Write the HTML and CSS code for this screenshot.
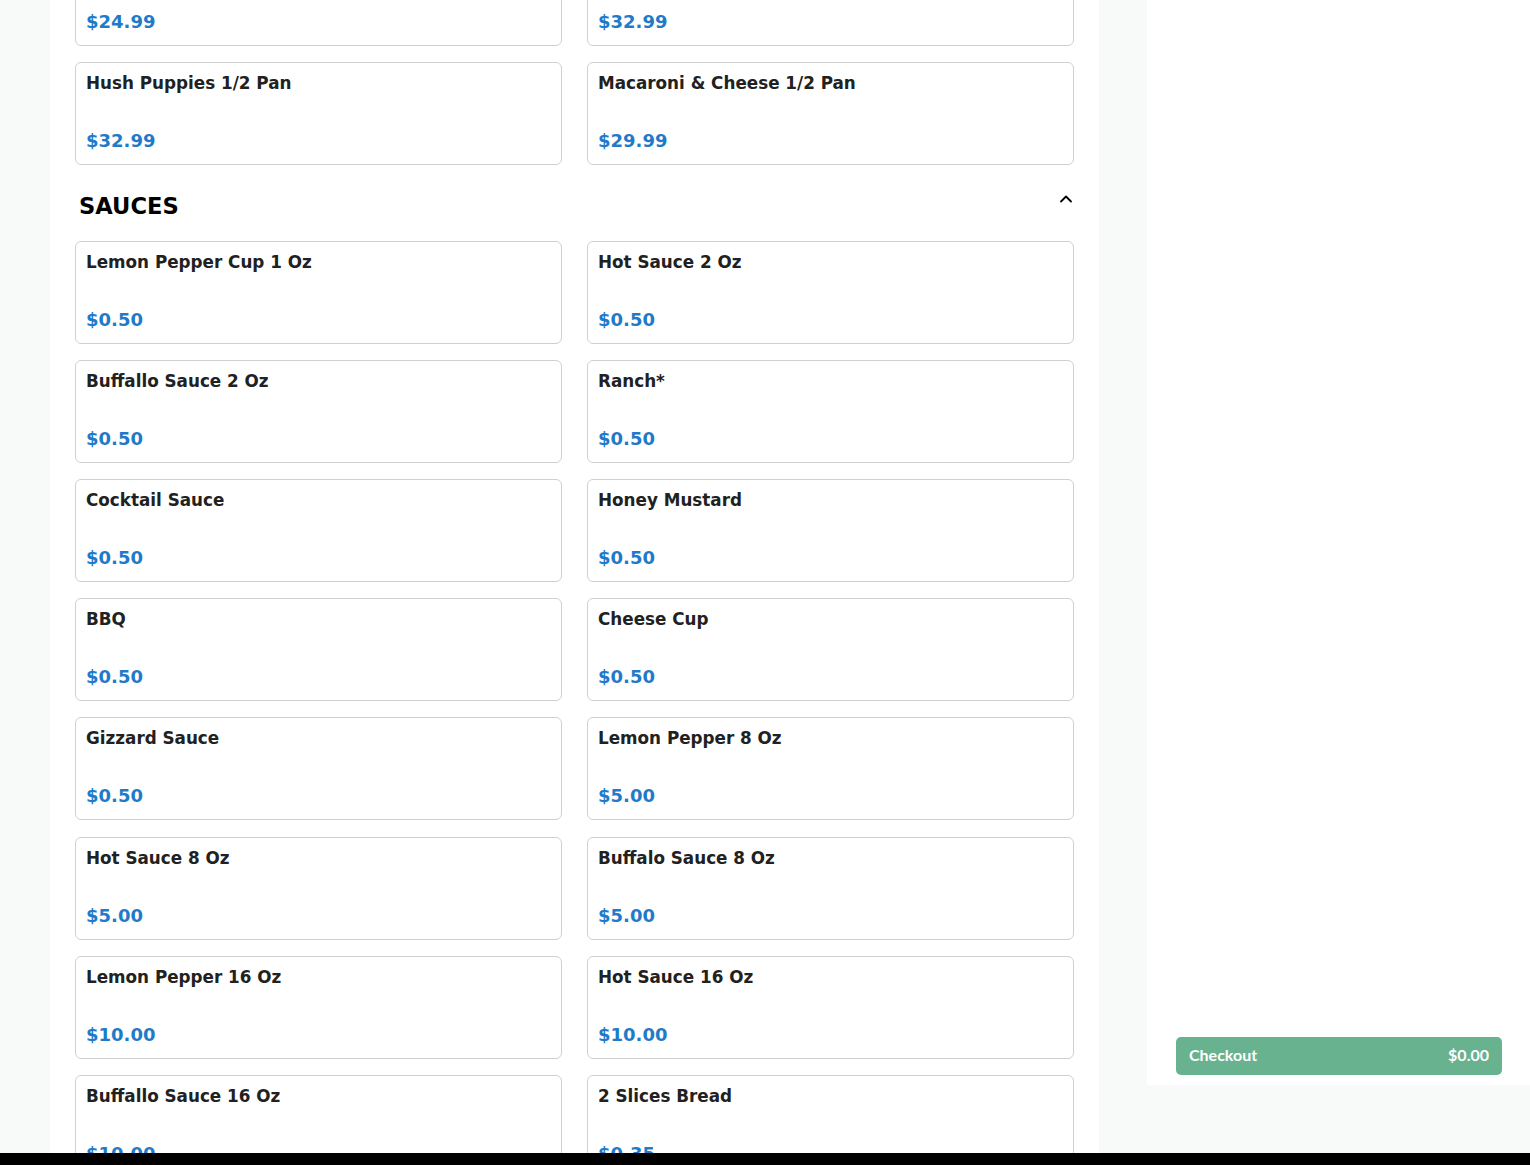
FILE: index.html
```html
<!DOCTYPE html>
<html lang="en">
<head>
    <meta charset="UTF-8">
    <meta name="viewport" content="width=device-width, initial-scale=1.0">
    <title>Menu</title>
    <link rel="stylesheet" href="styles.css">
</head>
<body>
    <div class="page">
        <main class="menu">
            <section class="category first">
                <div class="items">
                    <div class="item">
                        <div class="item-name">Collard Greens 1/2 Pan</div>
                        <div class="item-price">$24.99</div>
                    </div>
                    <div class="item">
                        <div class="item-name">Fries 1/2 Pan</div>
                        <div class="item-price">$32.99</div>
                    </div>
                    <div class="item">
                        <div class="item-name">Hush Puppies 1/2 Pan</div>
                        <div class="item-price">$32.99</div>
                    </div>
                    <div class="item">
                        <div class="item-name">Macaroni &amp; Cheese 1/2 Pan</div>
                        <div class="item-price">$29.99</div>
                    </div>
                </div>
            </section>

            <section class="category">
                <div class="category-header">
                    <h2>SAUCES</h2>
                    <svg class="chevron" width="14" height="14" viewBox="0 0 14 14">
                        <path d="M2 9.5 L7 4.5 L12 9.5" fill="none" stroke="#000" stroke-width="1.8" stroke-linecap="round" stroke-linejoin="round"/>
                    </svg>
                </div>
                <div class="items">
                    <div class="item">
                        <div class="item-name">Lemon Pepper Cup 1 Oz</div>
                        <div class="item-price">$0.50</div>
                    </div>
                    <div class="item">
                        <div class="item-name">Hot Sauce 2 Oz</div>
                        <div class="item-price">$0.50</div>
                    </div>
                    <div class="item">
                        <div class="item-name">Buffallo Sauce 2 Oz</div>
                        <div class="item-price">$0.50</div>
                    </div>
                    <div class="item">
                        <div class="item-name">Ranch*</div>
                        <div class="item-price">$0.50</div>
                    </div>
                    <div class="item">
                        <div class="item-name">Cocktail Sauce</div>
                        <div class="item-price">$0.50</div>
                    </div>
                    <div class="item">
                        <div class="item-name">Honey Mustard</div>
                        <div class="item-price">$0.50</div>
                    </div>
                    <div class="item">
                        <div class="item-name">BBQ</div>
                        <div class="item-price">$0.50</div>
                    </div>
                    <div class="item">
                        <div class="item-name">Cheese Cup</div>
                        <div class="item-price">$0.50</div>
                    </div>
                    <div class="item">
                        <div class="item-name">Gizzard Sauce</div>
                        <div class="item-price">$0.50</div>
                    </div>
                    <div class="item">
                        <div class="item-name">Lemon Pepper 8 Oz</div>
                        <div class="item-price">$5.00</div>
                    </div>
                    <div class="item">
                        <div class="item-name">Hot Sauce 8 Oz</div>
                        <div class="item-price">$5.00</div>
                    </div>
                    <div class="item">
                        <div class="item-name">Buffalo Sauce 8 Oz</div>
                        <div class="item-price">$5.00</div>
                    </div>
                    <div class="item">
                        <div class="item-name">Lemon Pepper 16 Oz</div>
                        <div class="item-price">$10.00</div>
                    </div>
                    <div class="item">
                        <div class="item-name">Hot Sauce 16 Oz</div>
                        <div class="item-price">$10.00</div>
                    </div>
                    <div class="item">
                        <div class="item-name">Buffallo Sauce 16 Oz</div>
                        <div class="item-price">$10.00</div>
                    </div>
                    <div class="item">
                        <div class="item-name">2 Slices Bread</div>
                        <div class="item-price">$0.35</div>
                    </div>
                </div>
            </section>
        </main>

        <aside class="cart">
            <a href="#" class="checkout-btn">
                <span>Checkout</span>
                <span>$0.00</span>
            </a>
        </aside>
    </div>
    <div class="bottom-bar"></div>
</body>
</html>
```

FILE: styles.css
```css
html, body {
    margin: 0;
    padding: 0;
    height: 100%;
    overflow: hidden;
}
body {
    font-family: 'DejaVu Sans', Verdana, sans-serif;
    background-color: #f8f9f9;
    color: #212121;
}
.page {
    display: flex;
    align-items: flex-start;
    padding-left: 50px;
    height: 100%;
}
.menu {
    width: 1049px;
    flex-shrink: 0;
    background: #fff;
    padding: 0 25px 0 25px;
    box-sizing: border-box;
    min-height: 100%;
}
.category.first {
    margin-top: -57px;
}
.category-header {
    display: flex;
    justify-content: space-between;
    align-items: flex-start;
    padding: 25px 1px 0 4px;
    margin-bottom: 19px;
}
.category-header h2 {
    margin: 0;
    font-size: 22.6px;
    line-height: 32px;
    font-weight: bold;
    color: #000;
}
.chevron {
    margin-top: 2px;
}
.items {
    display: grid;
    grid-template-columns: 1fr 1fr;
    column-gap: 25px;
    row-gap: 16.1px;
}
.item {
    height: 103px;
    box-sizing: border-box;
    border: 1px solid #d0d0d0;
    border-radius: 6px;
    padding: 10px 10px 12px;
    display: flex;
    flex-direction: column;
    justify-content: space-between;
    background: #fff;
}
.item-name {
    font-size: 16.8px;
    font-weight: bold;
    line-height: 20px;
    color: #212121;
}
.item-price {
    font-size: 18px;
    font-weight: bold;
    line-height: 22px;
    color: #1f7bc9;
}
.cart {
    width: 383px;
    height: 1085px;
    margin-left: 48px;
    background: #fff;
    box-sizing: border-box;
    padding: 0 28px 10px 29px;
    display: flex;
    flex-direction: column;
    justify-content: flex-end;
    flex-shrink: 0;
}
.checkout-btn {
    display: flex;
    justify-content: space-between;
    align-items: center;
    height: 38px;
    box-sizing: border-box;
    padding: 0 13px 3px;
    background: #68b28f;
    color: #fff;
    border-radius: 5px;
    text-decoration: none;
    font-family: 'Lato', 'Open Sans', sans-serif;
    font-weight: bold;
    font-size: 16px;
}
.bottom-bar {
    position: fixed;
    left: 0;
    right: 0;
    bottom: 0;
    height: 12px;
    background: #000;
}
```
